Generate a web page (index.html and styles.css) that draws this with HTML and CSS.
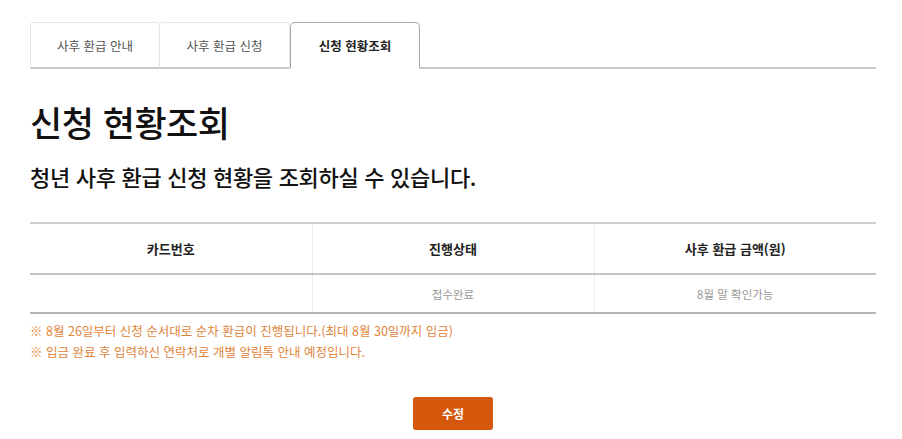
FILE: index.html
```html
<!DOCTYPE html>
<html lang="ko">
<head>
    <meta charset="UTF-8">
    <meta name="viewport" content="width=device-width, initial-scale=1.0">
    <title>신청 현황조회</title>
    <link rel="stylesheet" href="styles.css">
</head>
<body>
    <div class="wrap">
        <ul class="tabs">
            <li class="tab"><a href="#">사후 환급 안내</a></li>
            <li class="tab"><a href="#">사후 환급 신청</a></li>
            <li class="tab active"><a href="#">신청 현황조회</a></li>
        </ul>

        <h1 class="title">신청 현황조회</h1>
        <p class="subtitle">청년 사후 환급 신청 현황을 조회하실 수 있습니다.</p>

        <table class="status">
            <thead>
                <tr>
                    <th>카드번호</th>
                    <th>진행상태</th>
                    <th>사후 환급 금액(원)</th>
                </tr>
            </thead>
            <tbody>
                <tr>
                    <td></td>
                    <td>접수완료</td>
                    <td>8월 말 확인가능</td>
                </tr>
            </tbody>
        </table>

        <ul class="notes">
            <li>※ 8월 26일부터 신청 순서대로 순차 환급이 진행됩니다.(최대 8월 30일까지 입금)</li>
            <li>※ 입금 완료 후 입력하신 연락처로 개별 알림톡 안내 예정입니다.</li>
        </ul>

        <div class="btns">
            <button class="btn">수정</button>
        </div>
    </div>
</body>
</html>
```

FILE: styles.css
```css
body {
    margin: 0;
    background: #fff;
    color: #111;
    font-family: "Noto Sans CJK KR", "Noto Sans", sans-serif;
}

.wrap {
    width: 846px;
    margin-left: 30px;
    padding-top: 22px;
}

.tabs {
    display: flex;
    margin: 0;
    padding: 0;
    list-style: none;
    border-bottom: 2px solid #c8c8c8;
}

.tab {
    width: 130px;
    height: 47px;
    margin-bottom: -2px;
    border: 1px solid #e6e6e6;
    border-bottom: 2px solid #c8c8c8;
    border-radius: 4px 4px 0 0;
    box-sizing: border-box;
}

.tab + .tab {
    border-left: none;
}

.tab a {
    display: flex;
    height: 100%;
    align-items: center;
    justify-content: center;
    font-size: 12.5px;
    color: #555;
    text-decoration: none;
}

.tab.active {
    border: 1px solid #a8a8a8;
    border-bottom: 2px solid #fff;
    border-radius: 5px 5px 0 0;
}

.tab.active a {
    color: #222;
    font-weight: 700;
}

.title {
    margin: 33px 0 0;
    font-size: 35px;
    font-weight: 500;
    line-height: 40px;
    letter-spacing: -0.5px;
}

.subtitle {
    margin: 19px 0 0;
    font-size: 22px;
    font-weight: 500;
    line-height: 30px;
    letter-spacing: -0.3px;
}

.status {
    width: 100%;
    margin-top: 31px;
    border-collapse: collapse;
    border-top: 2px solid #cfcfcf;
    border-bottom: 2px solid #b5b5b5;
    table-layout: fixed;
}

.status th {
    height: 47px;
    font-size: 13px;
    font-weight: 700;
    color: #222;
    border-bottom: 2px solid #c4c4c4;
}

.status td {
    height: 35px;
    font-size: 11.5px;
    color: #999;
    text-align: center;
}

.status th + th,
.status td + td {
    border-left: 1px solid #ececec;
}

.notes {
    margin: 6px 0 0;
    padding: 0;
    list-style: none;
    font-size: 12.5px;
    line-height: 21px;
    color: #e0843a;
}

.btns {
    display: flex;
    justify-content: center;
    margin-top: 35px;
}

.btn {
    width: 80px;
    height: 33px;
    border: none;
    border-radius: 3px;
    background: #d4570b;
    color: #fff;
    font-family: inherit;
    font-size: 12px;
    font-weight: 700;
}
```
